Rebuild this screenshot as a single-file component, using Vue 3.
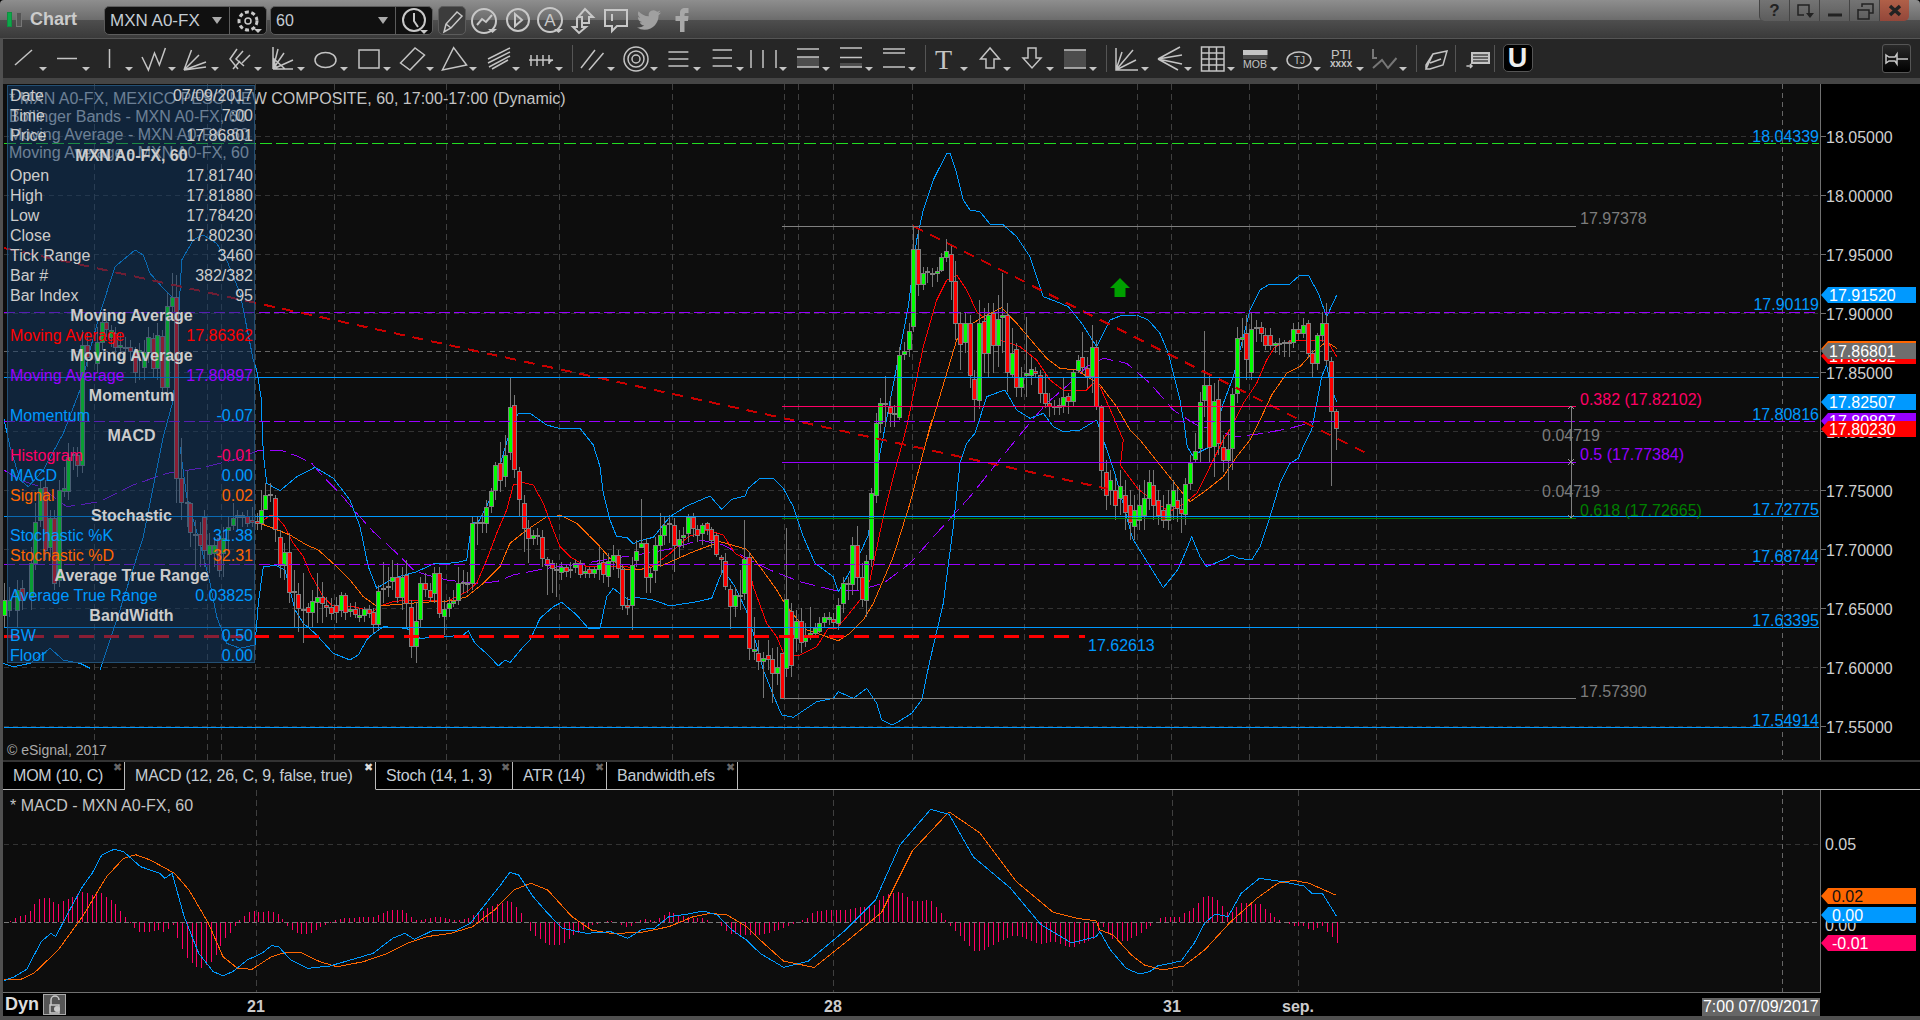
<template>
  <div class="app">
    <span class="left-edge"></span>
    <header class="titlebar">
      <span class="app-icon"><i class="on"></i><i></i></span>
      <span class="app-name">Chart</span>
      <div class="combo sym">
        <span class="combo-text">MXN A0-FX</span>
        <span class="combo-caret"></span>
        <span class="combo-btn">
          <svg width="36" height="29" viewBox="0 0 36 29">
            <circle cx="18" cy="14" r="9" class="ic gear" />
            <circle cx="18" cy="14" r="3" class="ic" />
            <path d="M24 22h8l-4 4z" class="fillc" />
          </svg>
        </span>
      </div>
      <div class="combo tf">
        <span class="combo-text small">60</span>
        <span class="combo-caret far"></span>
        <span class="combo-btn">
          <svg width="36" height="29" viewBox="0 0 36 29">
            <circle cx="18" cy="13" r="11" class="ic thick" />
            <path d="M18 6v8l4 6" class="ic thick" />
            <path d="M24 23h8l-4 4z" class="fillc" />
          </svg>
        </span>
      </div>
      <div class="pencil">
        <svg width="28" height="29" viewBox="0 0 28 29">
          <path d="M5 25l2-8L18 5l5 4-11 12zM7 17l5 4" class="ic" />
        </svg>
      </div>
      <svg class="title-icons" width="226" height="38" viewBox="468 0 226 38">
        <circle cx="485" cy="21" r="12" class="ic thick" />
        <path d="M478 25l5-6 4 3 6-7" class="ic thick" />
        <path d="M489 29h9l-4.500 4z" class="fillc" />
        <circle cx="519" cy="20" r="11" class="ic thick" />
        <path d="M516 14l7 6-7 6z" class="ic thick" />
        <circle cx="551" cy="20" r="12" class="ic thick" />
        <text x="551" y="26" text-anchor="middle" class="a-glyph">A</text>
        <path d="M555 29h9l-4.500 4z" class="fillc" />
        <path d="M586 9l8 8h-4v6h-7v-6h-4zM578 18v9h-4l6 6 7-6h-4v-4" class="ic thick" />
        <path d="M606 10h22v16h-10l-5 5v-5h-7zM613 14v7" class="ic thick" />
        <g transform="translate(638 8)">
          <path fill="#a0a0a0" d="M23.953 4.57a10 10 0 01-2.825.775 4.958 4.958 0 002.163-2.723c-.951.555-2.005.959-3.127 1.184a4.920 4.920 0 00-8.384 4.482C7.690 8.095 4.067 6.130 1.640 3.162a4.822 4.822 0 00-.666 2.475c0 1.710.870 3.213 2.188 4.096a4.904 4.904 0 01-2.228-.616v.060a4.923 4.923 0 003.946 4.827 4.996 4.996 0 01-2.212.085 4.936 4.936 0 004.604 3.417 9.867 9.867 0 01-6.102 2.105c-.390 0-.779-.023-1.170-.067a13.995 13.995 0 007.557 2.209c9.053 0 13.998-7.496 13.998-13.985 0-.210 0-.420-.015-.630A9.935 9.935 0 0024 4.590z" />
        </g>
        <path d="M681 32V21h-4.500v-5H681v-3c0-3.500 2-5 5-5h3.500v5H687c-1.200 0-1.500.6-1.500 1.500V16h4l-.5 5h-3.500v11z" fill="#a8a8a8" />
      </svg>
      <div class="win-btns">
        <span class="win-btn qm">?</span>
        <span class="win-btn">
          <svg width="22" height="18" viewBox="0 0 22 18"><path d="M15 12V3H4v10h6" class="wbi" /><path d="M12 11h8l-4 5z" fill="#222" /></svg>
        </span>
        <span class="win-btn">
          <svg width="22" height="18" viewBox="0 0 22 18"><path d="M4 13h14" class="wbi thick" /></svg>
        </span>
        <span class="win-btn">
          <svg width="22" height="18" viewBox="0 0 22 18"><path d="M4 8h11v9H4zM4 8V7M8 5V2h11v9h-4" class="wbi" /></svg>
        </span>
        <span class="win-btn close">
          <svg width="22" height="18" viewBox="0 0 22 18"><path d="M6 4l10 9M16 4L6 13" class="wbi x" /></svg>
        </span>
      </div>
    </header>

    <nav class="toolbar">
      <template v-for="(t, i) in tools" :key="i">
        <span v-if="t.sep" class="sep"></span>
        <svg v-else class="tool" :class="{ short: t.short }" :viewBox="t.short ? '0 0 30 30' : '0 0 43 30'">
          <path v-if="t.band" :d="t.band" fill="#4d4d4d" />
          <path v-if="t.solid" :d="t.solid" fill="#c4c4c4" />
          <path v-if="t.dark" :d="t.dark" fill="none" stroke="#444" stroke-width="1.500" />
          <path v-if="t.d" :d="t.d" class="ti" :class="{ dim: t.dim }" />
          <text v-if="t.text" :x="t.text.x" :y="t.text.y" :class="t.text.c">{{ t.text.s }}</text>
          <text v-if="t.text2" :x="t.text2.x" :y="t.text2.y" :class="t.text2.c">{{ t.text2.s }}</text>
          <path v-if="!t.short" d="M26 23h8l-4 4z" fill="#c4c4c4" />
        </svg>
      </template>
      <span class="u-btn">U</span>
      <span class="pin-btn">
        <svg width="26" height="24" viewBox="0 0 26 24">
          <path d="M2 8l3 2h6l2-3v10l-2-3H5l-3 2zM13 12h11" class="ic" />
        </svg>
      </span>
    </nav>
    <div class="strip"></div>

    <main class="main-pane">
      <svg class="plot" width="1920" height="676" viewBox="0 84 1920 676">
        <rect x="3" y="84" width="1817" height="676" fill="#0d0d0d" />
        <g shape-rendering="crispEdges">
          <line v-for="y in priceTicks" :key="'g' + y.y" x1="4" x2="1820" :y1="y.y" :y2="y.y" class="grid" />
          <line v-for="x in vgrid" :key="'v' + x" :x1="x" :x2="x" y1="84" y2="760" class="grid-v" />
          <line x1="1782.500" x2="1782.500" y1="84" y2="760" class="grid-c" />
          <line x1="4" x2="1820" y1="351.500" y2="351.500" class="grid-c" />
          <polyline :points="toStr(maPurple)" class="ln purple" />
          <polyline :points="toStr(maRed)" class="ln red" />
          <polyline :points="toStr(maOrange)" class="ln orange" />
          <polyline v-for="(b, i) in bands" :key="'b' + i" :points="toStr(b)" class="ln blue" />
          <g v-for="(c, i) in candles" :key="'c' + i">
            <line :x1="c.x" :x2="c.x" :y1="c.wt" :y2="c.wb" class="wick" />
            <rect :x="c.x - 2" :y="c.t" width="4" :height="c.h" class="body" :fill="c.g ? '#00ff00' : '#ff0000'" />
          </g>
          <line x1="4" x2="1108" y1="248" y2="489" class="trend" />
          <line x1="913" x2="1368" y1="226" y2="454" class="trend" />
          <line v-for="l in hlines" :key="'h' + l.y" x1="4" x2="1819" :y1="l.y" :y2="l.y" :class="l.c" />
          <line x1="4" x2="1085" y1="636" y2="636" class="reddash" />
          <line v-for="f in fibs" :key="'f' + f.y" x1="782" x2="1576" :y1="f.y" :y2="f.y" :stroke="f.c" />
          <line x1="1571" x2="1571" y1="406" y2="518" stroke="#808080" />
          <path d="M1568 409l3-3 3 3M1568 459l3 3 3-3M1568 465l3-3 3 3M1568 515l3 3 3-3" fill="none" stroke="#999" />
          <line x1="1820.500" x2="1820.500" y1="84" y2="760" stroke="#707070" />
          <line v-for="y in priceTicks" :key="'t' + y.y" x1="1820" x2="1826" :y1="y.y" :y2="y.y" stroke="#707070" />
        </g>
        <polygon points="1120,278 1130,288 1125.500,288 1125.500,297 1114.500,297 1114.500,288 1110,288" fill="#00a000" />

        <text x="9" y="104" class="st light">* MXN A0-FX, MEXICO PESO NEW COMPOSITE, 60, 17:00-17:00 (Dynamic)</text>
        <text x="9" y="122" class="st light">Bollinger Bands - MXN A0-FX, 60</text>
        <text x="9" y="140" class="st light">Moving Average - MXN A0-FX, 60</text>
        <text x="9" y="158" class="st light">Moving Average - MXN A0-FX, 60</text>
        <text x="7" y="755" class="copy">© eSignal, 2017</text>

        <text v-for="l in blueLabels" :key="l.s" :x="l.x" :y="l.y" :text-anchor="l.a" class="st bluet">{{ l.s }}</text>
        <text x="1580" y="224" class="st grayt">17.97378</text>
        <text x="1580" y="697" class="st grayt">17.57390</text>
        <text x="1580" y="405" class="st" fill="#ff0066">0.382 (17.82102)</text>
        <text x="1580" y="460" class="st" fill="#9900ff">0.5 (17.77384)</text>
        <text x="1580" y="516" class="st" fill="#008000">0.618 (17.72665)</text>
        <text x="1571" y="441" text-anchor="middle" class="st grayt">0.04719</text>
        <text x="1571" y="497" text-anchor="middle" class="st grayt">0.04719</text>

        <text v-for="y in priceTicks" :key="'l' + y.y" x="1826" :y="y.y + 6" class="st axis">{{ y.s }}</text>
        <g v-for="tag in priceTags" :key="tag.s + tag.y">
          <polygon :points="tagPoints(tag.y, 8)" :fill="tag.c" />
          <text x="1829" :y="tag.y + 6" class="st" fill="#fff">{{ tag.s }}</text>
        </g>
      </svg>

      <aside class="info">
        <div v-for="(r, i) in infoRows" :key="i" class="info-row" :class="{ head: r.head }" :style="{ color: r.c }">
          <span>{{ r.l }}</span>
          <span v-if="r.v">{{ r.v }}</span>
        </div>
      </aside>
    </main>

    <div class="tabs">
      <div v-for="tab in tabs" :key="tab.s" class="tab" :class="{ active: tab.on }" :style="{ width: tab.w + 'px' }">
        {{ tab.s }}
        <span class="tab-x">✖</span>
      </div>
      <div class="tab-rest"></div>
    </div>

    <section class="lower-pane">
      <svg width="1920" height="203" viewBox="0 790 1920 203">
        <rect x="3" y="790" width="1817" height="203" fill="#0d0d0d" />
        <g shape-rendering="crispEdges">
          <line x1="4" x2="1820" y1="844.500" y2="844.500" class="grid" />
          <line v-for="x in [256.5, 833.5, 1172.5, 1298.5]" :key="x" :x1="x" :x2="x" y1="790" y2="993" class="grid-v" />
          <line x1="1782.500" x2="1782.500" y1="790" y2="993" class="grid-c" />
          <line v-for="(h, i) in hist" :key="i" :x1="h.x" :x2="h.x" y1="922" :y2="h.y" stroke="#ff0066" />
          <line x1="4" x2="1820" y1="922.500" y2="922.500" class="zero" />
          <polyline :points="toStr(sigLine)" class="ln orange" />
          <polyline :points="toStr(macdLine)" class="ln blue" />
          <line x1="1820.500" x2="1820.500" y1="790" y2="993" stroke="#707070" />
          <line x1="3" x2="1820" y1="992.500" y2="992.500" stroke="#707070" />
        </g>
        <text x="10" y="811" class="st light">* MACD - MXN A0-FX, 60</text>
        <text x="1825" y="850" class="st axis">0.05</text>
        <text x="1825" y="931" class="st axis">0.00</text>
        <g v-for="tag in macdTags" :key="tag.s">
          <polygon :points="tagPoints(tag.y, 8)" :fill="tag.c" />
          <text x="1832" :y="tag.y + 6" class="st" :fill="tag.t">{{ tag.s }}</text>
        </g>
      </svg>
    </section>

    <footer class="x-axis">
      <span class="dyn">Dyn</span>
      <span class="lock">
        <svg width="22" height="20" viewBox="0 0 22 20">
          <path d="M7 10V5a4 4 0 018 0M6 10h9v8H6z" class="ic" />
          <circle cx="13" cy="14" r="3" fill="#ccc" />
        </svg>
      </span>
      <span v-for="d in dates" :key="d.s" class="date" :style="{ left: d.x + 'px' }">{{ d.s }}</span>
      <span class="stamp">7:00 07/09/2017</span>
    </footer>
    <div class="bottom-bar"></div>
  </div>
</template>

<script setup>
// page coords everywhere on the charts, the zoom lists are in 3x crop coords
const z = (bx, by, rows) => rows.map(([x, y]) => [bx + x / 3, by + y / 3])
const s = (rows) => rows.map(([x, y]) => [x * 1.2245, y * 1.2245])
const toStr = (pts) => pts.map((p) => p[0].toFixed(1) + ',' + p[1].toFixed(1)).join(' ')
const tagPoints = (y, h) => `1821,${y} 1828,${y - h} 1916,${y - h} 1916,${y + h} 1828,${y + h}`

const bar = (bx, by, rows) =>
  rows.map(([x, t, b, wt, wb, g]) => {
    const top = Math.round(by + t / 3) + 0.5
    const bot = Math.round(by + b / 3) + 0.5
    return {
      x: Math.round(bx + x / 3) + 0.5,
      t: top,
      h: Math.max(bot - top, 1),
      wt: by + wt / 3,
      wb: by + wb / 3,
      g,
    }
  })

const candles = [
  ...bar(0, 370, [
    [12, 690, 735, 640, 770, 1], [27, 690, 720, 650, 740, 1], [50, 660, 720, 630, 770, 1], [65, 655, 690, 630, 720, 0],
    [93, 580, 680, 530, 720, 1], [105, 455, 580, 400, 600, 1], [120, 355, 450, 330, 470, 1], [135, 350, 540, 330, 570, 0],
    [150, 445, 530, 420, 560, 1], [163, 445, 640, 420, 660, 0], [178, 360, 630, 330, 650, 1], [192, 355, 362, 290, 380, 1],
    [205, 260, 362, 220, 390, 1], [219, 252, 256, 230, 300, 1], [232, 255, 285, 230, 320, 0], [246, -75, 285, -120, 310, 1],
    [262, -75, -40, -110, -10, 0], [290, -85, -20, -130, 10, 1], [305, -145, -85, -170, -60, 1], [318, -145, -122, -170, -100, 0],
    [332, -120, -100, -135, -70, 1], [346, -110, -70, -130, -50, 0], [361, -75, -70, -110, -40, 1], [375, -70, -65, -100, -30, 1],
    [390, -70, -58, -90, -30, 0], [405, -55, 5, -70, 40, 0], [418, -60, -55, -80, 30, 1], [432, -55, -10, -90, 30, 1],
    [445, -100, -55, -130, -20, 1], [460, -95, -5, -110, 20, 0], [472, -105, -5, -140, 30, 1], [487, -102, 50, -120, 90, 0],
    [502, -192, 50, -230, 80, 1], [515, -218, -192, -290, -170, 1], [528, -220, 325, -285, 400, 0], [543, 325, 395, 205, 450, 0],
    [560, 395, 400, 300, 470, 1], [570, 400, 487, 395, 530, 0], [585, 492, 495, 450, 600, 1], [600, 492, 525, 455, 590, 0],
    [612, 440, 540, 420, 590, 0], [628, 525, 552, 490, 610, 1], [643, 525, 550, 500, 590, 1], [656, 505, 600, 490, 620, 0],
    [670, 505, 550, 470, 620, 1], [684, 470, 480, 440, 540, 1], [700, 445, 465, 400, 480, 1], [712, 435, 440, 420, 480, 1],
    [727, 435, 440, 425, 470, 1], [742, 438, 460, 420, 470, 0], [757, 450, 455, 410, 470, 0], [770, 452, 458, 430, 480, 0],
  ]),
  ...bar(260, 370, [
    [3, 420, 458, 360, 480, 1], [16, 375, 418, 340, 420, 1], [31, 373, 375, 340, 395, 1], [46, 385, 478, 375, 515, 0],
    [61, 502, 585, 480, 625, 0], [73, 545, 585, 520, 630, 1], [88, 545, 665, 490, 700, 0], [103, 662, 667, 600, 770, 1],
    [115, 673, 715, 640, 785, 0], [130, 716, 721, 610, 820, 1], [145, 712, 726, 700, 770, 0], [157, 692, 726, 660, 770, 1],
    [172, 680, 696, 610, 760, 1], [187, 682, 700, 635, 760, 0], [199, 706, 712, 680, 740, 0], [214, 712, 730, 685, 750, 0],
    [229, 704, 726, 680, 760, 0], [244, 674, 720, 665, 740, 1], [256, 674, 726, 670, 750, 0], [271, 716, 724, 700, 740, 1],
    [286, 716, 733, 695, 745, 0], [298, 736, 740, 715, 755, 1], [313, 718, 736, 710, 755, 1], [328, 718, 730, 705, 745, 0],
    [340, 727, 763, 715, 790, 0], [355, 662, 763, 645, 780, 1], [370, 655, 658, 575, 700, 1], [385, 648, 652, 590, 680, 1],
    [397, 620, 632, 570, 660, 1], [412, 620, 680, 580, 700, 0], [427, 622, 680, 590, 720, 1], [439, 616, 700, 570, 775, 0],
    [454, 710, 828, 690, 865, 0], [469, 752, 828, 695, 878, 1], [481, 640, 748, 620, 775, 1], [496, 640, 658, 610, 680, 0],
    [511, 660, 680, 640, 695, 0], [523, 608, 670, 590, 700, 1], [538, 608, 730, 590, 745, 0], [553, 718, 738, 690, 795, 1],
    [568, 700, 715, 680, 740, 1], [580, 694, 698, 660, 710, 1], [595, 638, 690, 590, 705, 1], [610, 637, 640, 600, 670, 1],
    [622, 638, 641, 605, 670, 1], [637, 458, 640, 440, 660, 1], [652, 455, 458, 440, 525, 1], [667, 455, 458, 430, 490, 1],
    [679, 412, 460, 390, 490, 1], [694, 364, 408, 355, 430, 1], [706, 284, 360, 275, 390, 1], [721, 278, 330, 215, 365, 0],
    [736, 254, 318, 195, 350, 1], [751, 110, 246, 25, 270, 1], [763, 104, 298, 75, 325, 0], [778, 302, 388, 290, 440, 0],
    [793, 398, 474, 375, 545, 0], [805, 474, 505, 450, 580, 0], [820, 494, 505, 480, 525, 1], [832, 494, 496, 475, 525, 1],
    [847, 500, 565, 480, 590, 0], [862, 567, 585, 560, 675, 0], [877, 580, 595, 570, 670, 0], [889, 597, 600, 580, 680, 1],
    [904, 590, 606, 575, 630, 1], [919, 592, 604, 585, 620, 0], [931, 596, 598, 575, 625, 1], [946, 578, 592, 570, 610, 1],
    [961, 578, 612, 570, 625, 0], [976, 602, 610, 590, 625, 1], [988, 598, 610, 590, 625, 0], [1003, 598, 610, 590, 625, 1],
    [1018, 580, 598, 530, 630, 1], [1030, 575, 612, 550, 640, 0], [1045, 572, 618, 550, 650, 1], [1060, 554, 572, 525, 600, 1],
    [1075, 554, 595, 540, 625, 0], [1087, 598, 706, 585, 720, 0], [1102, 706, 712, 680, 735, 0], [1117, 584, 706, 560, 780, 1],
    [1129, 542, 570, 510, 590, 1],
  ]),
  ...bar(620, 420, [
    [64, 368, 382, 238, 385, 1], [79, 368, 472, 355, 518, 0], [91, 460, 470, 440, 518, 1], [106, 376, 450, 350, 490, 1],
    [121, 345, 376, 280, 440, 1], [133, 316, 344, 290, 375, 1], [148, 308, 312, 285, 370, 0], [163, 314, 374, 295, 455, 0],
    [178, 356, 376, 330, 410, 1], [190, 344, 352, 320, 385, 1], [205, 292, 338, 282, 365, 1], [220, 292, 324, 280, 350, 0],
    [232, 326, 346, 315, 365, 0], [247, 314, 338, 310, 375, 1], [262, 310, 326, 305, 345, 0], [274, 328, 360, 320, 385, 0],
    [289, 346, 402, 340, 410, 0], [304, 412, 418, 405, 465, 0], [316, 424, 498, 400, 510, 0], [331, 508, 558, 495, 628, 0],
    [346, 526, 558, 500, 590, 1], [361, 526, 528, 450, 570, 1], [373, 418, 520, 300, 540, 1], [388, 412, 684, 395, 720, 0],
    [403, 688, 694, 590, 720, 1], [415, 698, 724, 660, 750, 0], [430, 714, 724, 695, 835, 1], [445, 704, 716, 660, 750, 0],
    [457, 718, 760, 685, 850, 0], [472, 740, 760, 680, 795, 1], [487, 700, 835, 700, 835, 0], [499, 536, 744, 325, 770, 1],
    [514, 574, 736, 550, 770, 0], [529, 604, 654, 570, 695, 1], [544, 604, 666, 565, 700, 0], [556, 644, 664, 610, 680, 1],
    [571, 640, 644, 560, 660, 1], [586, 625, 640, 610, 650, 1], [598, 610, 634, 590, 640, 1], [613, 592, 606, 580, 625, 1],
    [628, 592, 596, 575, 615, 1], [640, 596, 605, 580, 625, 0], [655, 556, 608, 535, 630, 1], [670, 488, 550, 470, 580, 1],
    [685, 488, 491, 470, 540, 1], [697, 374, 492, 350, 525, 1], [712, 374, 470, 318, 510, 0], [727, 472, 538, 430, 560, 0],
    [739, 422, 540, 405, 590, 1], [754, 220, 418, 205, 440, 1], [769, 8, 226, -20, 248, 1],
  ]),
  ...bar(760, 140, [
    [361, 788, 850, 775, 880, 1], [376, 788, 792, 708, 860, 0], [391, 800, 818, 770, 860, 0], [403, 820, 822, 795, 860, 1],
    [418, 646, 832, 620, 840, 1], [433, 632, 642, 605, 660, 1], [448, 574, 628, 548, 650, 1], [460, 328, 558, 260, 575, 1],
    [475, 328, 432, 270, 468, 0], [490, 398, 432, 380, 450, 1], [502, 392, 396, 380, 430, 0], [517, 398, 402, 385, 442, 1],
    [532, 394, 398, 380, 425, 1], [544, 352, 390, 340, 395, 1], [559, 332, 350, 297, 365, 1], [574, 342, 424, 315, 480, 0],
    [586, 424, 550, 362, 600, 0], [601, 548, 612, 515, 690, 0], [616, 548, 606, 515, 640, 1], [631, 548, 706, 525, 745, 0],
    [643, 716, 776, 690, 842, 0], [658, 550, 780, 480, 808, 1], [673, 544, 638, 505, 700, 0], [685, 524, 640, 490, 710, 1],
    [700, 520, 616, 490, 700, 0], [715, 538, 616, 465, 680, 1], [727, 526, 530, 400, 640, 1], [742, 526, 696, 490, 755, 0],
    [757, 638, 702, 565, 715, 1], [769, 628, 742, 610, 770, 0], [784, 712, 742, 680, 770, 1], [799, 700, 706, 530, 770, 1],
    [814, 688, 706, 650, 735, 1], [826, 692, 700, 680, 715, 0], [841, 704, 760, 690, 790, 0], [856, 758, 788, 700, 805, 0],
    [868, 790, 798, 760, 830, 0], [883, 798, 802, 780, 825, 1], [898, 796, 802, 775, 825, 1], [910, 770, 794, 710, 820, 1],
    [925, 768, 784, 760, 822, 0], [940, 696, 784, 690, 800, 1], [955, 660, 690, 645, 700, 1], [967, 652, 680, 575, 700, 0],
    [982, 684, 708, 650, 745, 0], [997, 622, 708, 555, 760, 1], [1009, 622, 798, 600, 810, 0], [1024, 802, 990, 795, 1050, 0],
  ]),
  ...bar(0, 0, [
    [3318, 1416, 1485, 1380, 1530, 0], [3330, 1440, 1470, 1410, 1515, 1], [3345, 1470, 1515, 1434, 1560, 0], [3360, 1458, 1494, 1410, 1545, 1],
    [3375, 1485, 1536, 1440, 1590, 0], [3390, 1515, 1566, 1470, 1620, 0], [3402, 1530, 1578, 1485, 1620, 1], [3417, 1515, 1560, 1455, 1590, 1],
    [3432, 1494, 1545, 1440, 1590, 1], [3447, 1446, 1494, 1410, 1530, 1], [3459, 1455, 1515, 1410, 1560, 0], [3474, 1500, 1545, 1470, 1575, 0],
    [3489, 1530, 1560, 1485, 1584, 0], [3504, 1512, 1560, 1470, 1590, 1], [3519, 1470, 1518, 1440, 1560, 1], [3531, 1500, 1524, 1464, 1566, 0],
  ]),
  ...bar(1180, 260, [
    [3, 747, 760, 715, 818, 0], [16, 673, 762, 655, 795, 1], [31, 608, 670, 585, 690, 1], [46, 574, 596, 520, 610, 1],
    [61, 426, 565, 395, 608, 1], [73, 374, 420, 212, 470, 1], [88, 376, 562, 340, 610, 0], [103, 424, 558, 370, 650, 1],
    [115, 418, 548, 360, 585, 0], [130, 560, 600, 525, 635, 0], [145, 568, 600, 515, 690, 1], [157, 403, 565, 385, 630, 1],
    [172, 235, 400, 200, 430, 1], [187, 232, 236, 175, 265, 1], [199, 220, 298, 165, 360, 0], [214, 206, 336, 160, 360, 1],
    [229, 200, 204, 180, 245, 1], [244, 200, 220, 185, 245, 0], [256, 224, 256, 205, 270, 0], [271, 224, 256, 205, 270, 0],
    [286, 248, 256, 245, 280, 1], [298, 248, 252, 235, 285, 1], [313, 246, 250, 240, 290, 1], [328, 246, 250, 240, 290, 1],
    [340, 208, 246, 190, 265, 1], [355, 208, 220, 185, 240, 0], [370, 194, 220, 175, 235, 1], [385, 190, 280, 180, 295, 0],
    [397, 278, 310, 270, 355, 0], [412, 226, 310, 220, 330, 1], [427, 190, 224, 155, 245, 1], [439, 190, 300, 128, 315, 0],
    [454, 302, 452, 292, 678, 0], [469, 454, 505, 448, 570, 0],
  ]),
]

const bands = [
  z(0, 370, [[12, 148], [30, 230], [60, 330], [85, 350], [130, 300], [190, 190], [240, 60], [270, -60], [300, -170], [345, -310], [405, -360], [430, -345], [450, -290], [490, -245], [515, -220]]),
  [
    ...z(0, 370, [[300, 900], [350, 750], [430, 500], [490, 200], [520, 90], [530, -50], [545, -330], [580, -390], [610, -405], [650, -380], [680, -330], [720, -230], [760, -30], [770, 0]]),
    ...z(260, 370, [[3, 80], [10, 250], [20, 340], [60, 362], [110, 320], [165, 292], [220, 325], [270, 390], [300, 470], [325, 590], [350, 655], [400, 625], [470, 605], [520, 582], [590, 578], [620, 570], [635, 460], [655, 455], [680, 410], [700, 360], [720, 285], [745, 200], [775, 130], [810, 130], [860, 165], [905, 177], [960, 175], [1000, 225], [1020, 290], [1030, 370], [1050, 450], [1070, 500]]),
    ...z(620, 420, [[20, 352], [40, 372], [60, 362], [100, 352], [150, 290], [200, 258], [270, 228], [305, 268], [335, 238], [375, 228], [385, 205], [420, 175], [460, 175], [490, 205], [520, 260], [550, 350], [585, 430], [640, 470], [655, 515], [670, 490], [720, 400], [745, 345], [780, 100]]),
    ...z(760, 140, [[410, 680], [445, 500], [470, 300], [490, 210], [520, 120], [560, 40], [570, 40], [590, 100], [610, 180], [630, 210], [660, 215], [690, 252], [730, 255], [770, 290], [810, 350], [850, 470], [890, 485], [925, 500], [965, 550], [1010, 620], [1050, 540], [1080, 528], [1130, 525], [1165, 540], [1200, 580], [1225, 640], [1260, 780]]),
    ...z(1180, 260, [[12, 490], [22, 560], [40, 590], [60, 575], [90, 560], [110, 500], [130, 430], [160, 350], [185, 250], [210, 150], [240, 90], [265, 75], [330, 72], [360, 45], [385, 45], [415, 100], [440, 170], [470, 105]]),
  ],
  z(0, 370, [[10, 880], [40, 890], [90, 880], [150, 835], [190, 870], [240, 880], [270, 895]]),
  [
    ...z(0, 370, [[540, 230], [560, 380], [600, 520], [630, 640], [650, 740], [680, 820], [720, 835], [765, 825], [775, 700], [790, 590]]),
    ...z(260, 370, [[20, 590], [45, 585], [75, 600], [90, 660], [105, 720], [130, 760], [165, 790], [220, 850], [270, 870], [295, 855], [320, 810], [335, 795], [370, 770], [440, 775], [480, 805], [560, 800], [610, 795], [625, 782], [645, 820], [690, 860], [715, 888], [735, 870], [750, 878], [790, 830], [810, 810], [840, 745], [880, 710], [905, 697], [950, 735], [985, 775], [1020, 775], [1040, 680], [1060, 655], [1090, 680], [1110, 690]]),
    ...z(620, 420, [[35, 530], [100, 540], [150, 558], [230, 545], [275, 535], [300, 470], [310, 450], [345, 500], [378, 570], [400, 640], [430, 750], [460, 825], [485, 885], [520, 892], [590, 845], [640, 835], [655, 815], [700, 835], [740, 805], [770, 850], [785, 900], [815, 915], [835, 905], [875, 880], [905, 840], [930, 720], [970, 550], [1000, 320], [1020, 130], [1040, 70], [1065, 40]]),
    ...z(760, 140, [[680, 770], [720, 755], [735, 750], [770, 810], [810, 835], [850, 820], [880, 860], [910, 875], [960, 870], [1010, 840], [1020, 870]]),
    ...s([[910, 385], [925, 440], [950, 480], [962, 465]]),
    ...z(1180, 260, [[15, 880], [35, 830], [60, 890], [80, 920], [140, 895], [155, 885], [175, 895], [215, 900], [240, 860], [270, 770], [300, 670], [330, 610], [355, 595], [370, 560], [395, 510], [410, 430], [425, 350], [440, 315], [455, 390], [470, 425]]),
  ],
]

const maRed = [
  ...z(260, 370, [[0, 460], [30, 435], [50, 440], [75, 470], [100, 520], [130, 560], [150, 610], [190, 680], [215, 705], [280, 710], [340, 725], [360, 708], [400, 695], [440, 690], [490, 690], [560, 695], [620, 665], [650, 640], [680, 570], [710, 490], [740, 420], [760, 345], [790, 338], [820, 345], [850, 400], [880, 480], [900, 530], [930, 560], [980, 590], [1040, 590]]),
  ...z(620, 420, [[20, 440], [60, 450], [110, 430], [150, 400], [205, 350], [265, 330], [310, 345], [345, 400], [380, 420], [400, 500], [440, 610], [470, 650], [495, 710], [540, 705], [590, 680], [625, 625], [650, 625], [680, 590], [720, 540], [750, 480], [790, 290], [820, 170], [850, 60]]),
  ...z(760, 140, [[440, 860], [490, 620], [530, 480], [560, 420], [590, 405], [620, 450], [650, 515], [680, 540], [720, 600], [780, 620], [830, 660], [870, 720], [910, 750], [980, 750], [1000, 730], [1020, 740], [1060, 830], [1090, 900]]),
  ...s([[915, 380], [930, 400], [955, 418]]),
  ...z(1180, 260, [[20, 725], [50, 700], [80, 640], [100, 600], [130, 540], [160, 490], [190, 430], [230, 370], [260, 300], [285, 260], [340, 240], [400, 240], [440, 240], [470, 290]]),
]

const maOrange = [
  ...z(260, 370, [[0, 460], [40, 475], [90, 495], [140, 525], [175, 540], [230, 590], [270, 630], [310, 680], [345, 705], [390, 705], [450, 700], [520, 695], [580, 692], [620, 680], [670, 640], [720, 590], [750, 520], [800, 480], [860, 440], [905, 437], [950, 460], [990, 500], [1020, 530], [1050, 565]]),
  ...z(620, 420, [[20, 450], [60, 448], [130, 435], [220, 395], [300, 365], [380, 388], [420, 440], [470, 510], [500, 560], [560, 630], [620, 650], [655, 662], [690, 640], [730, 600], [760, 550], [820, 410], [870, 250], [935, 0]]),
  ...z(760, 140, [[500, 900], [545, 750], [590, 600], [630, 555], [670, 530], [725, 503], [770, 550], [830, 620], [860, 655], [900, 685], [950, 690], [1020, 735], [1070, 800], [1110, 870], [1140, 900]]),
  ...z(1180, 260, [[0, 690], [30, 725], [80, 690], [130, 650], [170, 590], [210, 540], [240, 480], [275, 405], [320, 340], [360, 320], [400, 275], [440, 245], [470, 265]]),
]

const maPurple = [
  ...z(0, 370, [[12, 300], [60, 330], [120, 350], [200, 410], [300, 395], [400, 345], [500, 310], [600, 295], [700, 270], [780, 240]]),
  ...z(260, 370, [[5, 240], [60, 240], [110, 258], [155, 280], [190, 320], [240, 370], [290, 430], [340, 485], [400, 540], [430, 570], [460, 600], [500, 615], [560, 630], [640, 640], [710, 635], [760, 615], [860, 595], [960, 582], [1060, 565]]),
  ...z(620, 420, [[80, 400], [160, 385], [240, 360], [310, 375], [390, 420], [450, 450], [540, 485], [640, 510], [720, 510], [790, 490], [870, 430], [950, 340], [1050, 230], [1130, 130]]),
  ...z(760, 140, [[800, 860], [860, 790], [930, 730], [980, 680], [1030, 655], [1100, 670], [1170, 730], [1240, 810]]),
  ...z(1180, 260, [[10, 470], [50, 495], [100, 510], [170, 530], [250, 520], [330, 505], [400, 485]]),
]

const macdLine = [
  ...[[8, 722], [30, 710], [55, 688], [85, 605], [105, 580], [115, 590], [140, 520], [170, 440], [190, 400], [210, 345], [235, 328], [255, 335], [290, 380], [330, 400], [340, 415], [355, 400], [380, 530], [410, 640], [440, 695], [460, 707], [480, 695], [510, 660], [540, 640], [560, 617], [575, 620], [600, 660], [635, 685], [680, 678], [730, 657], [770, 640], [810, 595], [835, 580], [855, 598], [895, 570], [940, 572], [970, 550], [1000, 495], [1030, 440], [1052, 397], [1070, 405], [1100, 470], [1130, 520], [1160, 565], [1210, 580], [1260, 575], [1295, 595], [1325, 568], [1350, 565], [1380, 530], [1420, 522], [1450, 513], [1480, 525], [1510, 570], [1540, 600], [1568, 640]].map(([x, y]) => [x / 2.063, y / 3 + 740]),
  ...s([[640, 790], [660, 785], [690, 760], [715, 735], [735, 690], [760, 661], [775, 665], [795, 700], [825, 725], [850, 755], [875, 770], [895, 765]]),
  ...[[0, 455], [20, 510], [50, 565], [75, 582], [95, 575], [110, 558], [155, 543], [180, 490], [200, 430], [220, 402], [245, 410], [270, 340], [305, 295], [350, 305], [390, 318], [405, 340], [425, 340], [452, 408]].map(([x, y]) => [x / 1.912 + 1100, y / 3 + 780]),
]

const sigLine = [
  ...[[8, 718], [40, 720], [70, 700], [120, 630], [170, 530], [220, 410], [255, 355], [280, 344], [310, 360], [360, 400], [390, 450], [430, 550], [460, 650], [490, 685], [520, 688], [560, 650], [590, 637], [620, 637], [660, 665], [695, 680], [750, 665], [800, 640], [840, 610], [880, 590], [930, 580], [975, 560], [1020, 510], [1060, 450], [1095, 430], [1130, 450], [1180, 530], [1220, 570], [1260, 580], [1320, 578], [1380, 560], [1430, 530], [1465, 520], [1500, 525], [1540, 560], [1568, 600]].map(([x, y]) => [x / 2.063, y / 3 + 740]),
  ...s([[640, 785], [665, 790], [690, 770], [720, 745], [745, 695], [775, 663], [800, 680], [830, 720], [860, 745], [880, 750], [895, 752]]),
  ...[[0, 450], [25, 465], [60, 525], [85, 555], [120, 570], [160, 558], [200, 510], [250, 425], [300, 355], [340, 310], [370, 301], [400, 310], [450, 345]].map(([x, y]) => [x / 1.912 + 1100, y / 3 + 780]),
]

const at = (line, x) => {
  for (let i = 1; i < line.length; i++) {
    if (line[i][0] >= x) {
      const [x0, y0] = line[i - 1]
      const [x1, y1] = line[i]
      return y0 + ((y1 - y0) * (x - x0)) / (x1 - x0 || 1)
    }
  }
  return line[line.length - 1][1]
}

const hist = []
for (let x = 1336.5; x > 8; x -= 4.77) {
  const d = at(macdLine, x) - at(sigLine, x)
  hist.push({ x: Math.round(x) + 0.5, y: 922 + d })
}

const priceTicks = [
  ['18.05000', 136], ['18.00000', 195], ['17.95000', 254], ['17.90000', 313], ['17.85000', 372], ['17.80000', 431],
  ['17.75000', 490], ['17.70000', 549], ['17.65000', 608], ['17.60000', 667], ['17.55000', 726],
].map(([l, y]) => ({ s: l, y: y + 0.5 }))

const vgrid = [94, 207, 221, 255, 334, 446, 559, 672, 784, 798, 833, 912, 1024, 1137, 1171, 1249, 1298, 1376].map((x) => x + 0.5)

const hlines = [
  { y: 143.5, c: 'gdash' }, { y: 312.5, c: 'pdash' }, { y: 421.5, c: 'pdash' }, { y: 564.5, c: 'pdash' },
  { y: 377.5, c: 'bsolid' }, { y: 516.5, c: 'bsolid' }, { y: 627.5, c: 'bsolid' }, { y: 727.5, c: 'bsolid' },
]

const fibs = [
  { y: 226.5, c: '#808080' }, { y: 406.5, c: '#ff0066' }, { y: 462.5, c: '#9900ff' }, { y: 518.5, c: '#008000' }, { y: 698.5, c: '#808080' },
]

const blueLabels = [
  { s: '18.04339', x: 1819, y: 142, a: 'end' }, { s: '17.90119', x: 1819, y: 310, a: 'end' },
  { s: '17.80816', x: 1819, y: 420, a: 'end' }, { s: '17.72775', x: 1819, y: 515, a: 'end' },
  { s: '17.68744', x: 1819, y: 562, a: 'end' }, { s: '17.63395', x: 1819, y: 626, a: 'end' },
  { s: '17.54914', x: 1819, y: 726, a: 'end' }, { s: '17.62613', x: 1088, y: 651, a: 'start' },
]

const priceTags = [
  { s: '17.91520', y: 295, c: '#0099ff' }, { s: '17.86641', y: 349, c: '#ff6600' }, { s: '17.86362', y: 356, c: '#ff0000' },
  { s: '17.86801', y: 351, c: '#6e6e6e' }, { s: '17.82507', y: 402, c: '#0099ff' }, { s: '17.80897', y: 421, c: '#9900ff' },
  { s: '17.80230', y: 429, c: '#ff0000' },
]

const macdTags = [
  { s: '0.02', y: 896, c: '#ff6600', t: '#111' }, { s: '0.00', y: 915, c: '#0099ff', t: '#fff' }, { s: '-0.01', y: 943, c: '#ff0066', t: '#fff' },
]

const infoRows = [
  { l: 'Date', v: '07/09/2017' }, { l: 'Time', v: '7:00' }, { l: 'Price', v: '17.86801' },
  { l: 'MXN A0-FX, 60', head: true },
  { l: 'Open', v: '17.81740' }, { l: 'High', v: '17.81880' }, { l: 'Low', v: '17.78420' }, { l: 'Close', v: '17.80230' },
  { l: 'Tick Range', v: '3460' }, { l: 'Bar #', v: '382/382' }, { l: 'Bar Index', v: '95' },
  { l: 'Moving Average', head: true }, { l: 'Moving Average', v: '17.86362', c: '#ff0000' },
  { l: 'Moving Average', head: true }, { l: 'Moving Average', v: '17.80897', c: '#9900ff' },
  { l: 'Momentum', head: true }, { l: 'Momentum', v: '-0.07', c: '#0099ff' },
  { l: 'MACD', head: true }, { l: 'Histogram', v: '-0.01', c: '#ff0066' }, { l: 'MACD', v: '0.00', c: '#0099ff' }, { l: 'Signal', v: '0.02', c: '#ff6600' },
  { l: 'Stochastic', head: true }, { l: 'Stochastic %K', v: '31.38', c: '#0099ff' }, { l: 'Stochastic %D', v: '32.31', c: '#ff6600' },
  { l: 'Average True Range', head: true }, { l: 'Average True Range', v: '0.03825', c: '#0099ff' },
  { l: 'BandWidth', head: true }, { l: 'BW', v: '0.50', c: '#0099ff' }, { l: 'Floor', v: '0.00', c: '#0099ff' },
]

const tabs = [
  { s: 'MOM (10, C)', w: 122 }, { s: 'MACD (12, 26, C, 9, false, true)', w: 251, on: true },
  { s: 'Stoch (14, 1, 3)', w: 137 }, { s: 'ATR (14)', w: 94 }, { s: 'Bandwidth.efs', w: 131 },
]

const dates = [{ s: '21', x: 256 }, { s: '28', x: 833 }, { s: '31', x: 1172 }, { s: 'sep.', x: 1298 }]

const tools = [
  { d: 'M2 21L19 6' },
  { d: 'M1 14.500H21' },
  { d: 'M10.500 5V24' },
  { d: 'M0 13L6.400 26L12.500 9L17.400 21L23.400 4' },
  { d: 'M-1 26L6.500 6M-1 26L14 11M-1 26L21 18M-1 26L21 23' },
  { d: 'M9 5L2 15L10 25M15 7L8 15L16 22M22 11L14 19M5 25L12 17' },
  { d: 'M2 25V3M2 25L7 5M2 25L13 9M2 25L22 16M2 25H22M6 25L2 15M2 14L14 25' },
  { d: 'M22 16a10.500 7.500 0 1 1-21 0a10.500 7.500 0 1 1 21 0' },
  { d: 'M2 6H22V24H2Z' },
  { d: 'M0.500 19L15 4L24.500 11L10 26Z' },
  { d: 'M-0.600 26L10.600 3.600L23.600 21Z' },
  { d: 'M2 15L24 4M2 19L24 8M3 23L24 12M6 25L22 16' },
  { d: 'M0 16H24M2 11V22M8 11V22M14 11V22M20 11V20Q20 17 24 16' },
  { sep: true },
  { d: 'M0 24L14 6M8 26L22.500 9' },
  { d: 'M24 15a12 12 0 1 1-24 0a12 12 0 1 1 24 0M20 15a8 8 0 1 1-16 0a8 8 0 1 1 16 0M16 15a4 4 0 1 1-8 0a4 4 0 1 1 8 0' },
  { d: 'M1.400 8H21.400M1.400 15H21.400M1.400 22H21.400' },
  { d: 'M2.600 6H22M2.600 14H22M2.600 22H22' },
  { d: 'M-2 6V24M10 6V24M23 6V24' },
  { band: 'M1 13H23V23H1Z', d: 'M1 5H23M1 13H23M1 23H23' },
  { band: 'M1 19H23V23H1Z', d: 'M1 4H23M1 13.500H23M1 23H23' },
  { d: 'M1 5H23M1 9H23M1 23H23' },
  { sep: true },
  { text: { s: 'T', x: 1, y: 25, c: 'tx-t' } },
  { d: 'M13 4L3.500 15H9V24H17V15H22.500Z' },
  { d: 'M8 4H16V14H21L12 24L3 14H8Z' },
  { band: 'M1 6H23V24H1Z', d: 'M1 6H23M1 24H23' },
  { sep: true },
  { d: 'M1 4V26H23M1 26L18 6M1 26L7 8M1 26L21 16' },
  { d: 'M0 15L22 3M0 15L24 11M0 15L24 20M0 15L20 26' },
  { d: 'M0.500 3H23V27H0.500ZM8 3V27M15.500 3V27M0.500 9H23M0.500 15H23M0.500 21H23' },
  { solid: 'M-1 6H23.500V11H-1Z', band: 'M-1 11H23.500V15H-1Z', text: { s: 'MOB', x: -1, y: 24, c: 'tx-s' } },
  { d: 'M24 16a12 8 0 1 1-24 0a12 8 0 1 1 24 0', text: { s: 'TJ', x: 7, y: 20, c: 'tx-xs' } },
  { text: { s: 'PTI', x: 1, y: 15, c: 'tx-m' }, text2: { s: 'xxxx', x: 0, y: 23, c: 'tx-xs b' } },
  { d: 'M0 5V14H4M0 24L9 16L15 24L23.500 14', dim: true },
  { sep: true },
  { short: true, d: 'M1 25L8 10L22 7L18 21L5 25ZM1 25L1 21L8 10M5 19L16 15' },
  { sep: true },
  { short: true, solid: 'M7 8H26V20H7Z', dark: 'M9 11H24M9 14H24M9 17H24', d: 'M2.400 22H8M6 20L8 22L6 24' },
  { sep: true },
]
</script>

<style scoped>
.app {
  position: relative;
  width: 1920px;
  height: 1020px;
  background: #000;
  display: flex;
  flex-direction: column;
  overflow: hidden;
  font-family: "Liberation Sans", Arial, sans-serif;
  color: #ccc;
}
.left-edge {
  position: absolute;
  left: 0;
  top: 38px;
  bottom: 0;
  width: 3px;
  background: #505050;
  z-index: 2;
}

.titlebar {
  height: 38px;
  flex: none;
  display: flex;
  align-items: flex-start;
  background: linear-gradient(#8e8e8e 0, #6c6c6c 20px, #4e4e4e 20px, #3a3a3a 38px);
  border-radius: 4px 4px 0 0;
}
.app-icon {
  display: flex;
  gap: 4px;
  margin: 12px 0 0 7px;
  height: 15px;
  width: 15px;
  flex: none;
}
.app-icon i {
  width: 6px;
  height: 15px;
  flex: none;
  background: #555;
  border: 1px solid #777;
  box-sizing: border-box;
}
.app-icon i.on {
  width: 5px;
  background: #0ca84a;
  border-color: #0f8f40;
}
.app-name {
  margin: 9px 0 0 8px;
  width: 74px;
  font-size: 18px;
  font-weight: 700;
  color: #ccc;
}
.combo {
  display: flex;
  align-items: center;
  height: 29px;
  margin-top: 6px;
  box-sizing: border-box;
  background: #101010;
  border: 1px solid #5c5c5c;
  border-radius: 5px;
  width: 163px;
}
.tf {
  margin-left: 3px;
}
.combo-text {
  font-size: 17px;
  color: #c4ccd4;
  margin-left: 5px;
  width: 102px;
}
.combo-text.small {
  font-size: 16px;
  width: 102px;
}
.combo-caret {
  width: 0;
  height: 0;
  border: 5.5px solid transparent;
  border-top: 7px solid #aaa;
  border-bottom: 0;
  margin-left: 0;
}
.combo-btn {
  margin-left: auto;
  height: 100%;
  width: 36px;
  border-left: 1px solid #5c5c5c;
  box-sizing: content-box;
}
.pencil {
  margin: 6px 0 0 5px;
  width: 28px;
  height: 29px;
  box-sizing: border-box;
  background: #3c3c3c;
  border: 1px solid #5c5c5c;
  border-radius: 5px;
}
.title-icons {
  margin-left: 1px;
  flex: none;
}
.ic {
  fill: none;
  stroke: #c8c8c8;
  stroke-width: 1.5;
}
.ic.thick {
  stroke-width: 2;
}
.ic.gear {
  stroke-width: 3;
  stroke-dasharray: 4 2.500;
}
.fillc {
  fill: #c8c8c8;
}
.a-glyph {
  font-size: 17px;
  fill: #c8c8c8;
}
.win-btns {
  margin-left: auto;
  margin-right: 11px;
  display: flex;
  height: 21px;
}
.win-btn {
  width: 30px;
  height: 21px;
  display: flex;
  align-items: center;
  justify-content: center;
  background: linear-gradient(#747474, #5c5c5c);
  border-left: 1px solid #444;
  box-sizing: border-box;
}
.win-btn:first-child {
  border-radius: 0 0 0 5px;
}
.win-btn.qm {
  font-size: 17px;
  font-weight: 700;
  color: #222;
}
.win-btn.close {
  background: linear-gradient(#b06048, #93473a);
  border-radius: 0 0 5px 0;
}
.wbi {
  fill: none;
  stroke: #222;
  stroke-width: 1.500;
}
.wbi.thick {
  stroke-width: 3;
}
.wbi.x {
  stroke-width: 3.500;
}

.toolbar {
  height: 40px;
  flex: none;
  display: flex;
  align-items: flex-start;
  padding: 5px 0 0 12.6px;
  box-sizing: border-box;
  background: #262626;
  border-top: 1px solid #555;
}
.tool {
  width: 43px;
  height: 30px;
  flex: none;
  overflow: visible;
}
.tool.short {
  width: 30px;
}
.ti {
  fill: none;
  stroke: #c4c4c4;
  stroke-width: 1.500;
}
.ti.dim {
  stroke: #777;
  stroke-width: 2;
}
.sep {
  flex: none;
  width: 1px;
  height: 27px;
  margin: 1px 8px 0 0;
  background: #555;
}
.tx-t {
  font-family: "Liberation Serif", serif;
  font-size: 28px;
  fill: #c4c4c4;
}
.tx-s {
  font-size: 10.500px;
  fill: #c4c4c4;
}
.tx-m {
  font-size: 13px;
  fill: #c4c4c4;
}
.tx-xs {
  font-size: 10px;
  fill: #c4c4c4;
}
.tx-xs.b {
  font-weight: 700;
}
.u-btn {
  flex: none;
  width: 30px;
  height: 28px;
  box-sizing: border-box;
  background: #000;
  border: 1px solid #555;
  border-radius: 5px;
  text-align: center;
  font-size: 27px;
  line-height: 26px;
  font-weight: 700;
  color: #eee;
}
.pin-btn {
  flex: none;
  margin: 0 9px 0 auto;
  width: 29px;
  height: 29px;
  box-sizing: border-box;
  display: flex;
  align-items: center;
  justify-content: center;
  background: linear-gradient(#2a2a2a, #000);
  border: 1px solid #555;
  border-radius: 3px;
}
.strip {
  height: 6px;
  flex: none;
  background: #454545;
}

.main-pane {
  position: relative;
  height: 676px;
  flex: none;
  background: #000;
}
.plot {
  display: block;
}
.grid {
  stroke: #333;
  stroke-dasharray: 5 4;
}
.grid-v {
  stroke: #3f3f3f;
  stroke-dasharray: 6 4;
}
.grid-c {
  stroke: #666;
  stroke-dasharray: 5 4;
}
.zero {
  stroke: #777;
  stroke-dasharray: 5 3;
}
.ln {
  fill: none;
  stroke-width: 1;
}
.blue {
  stroke: #0099ff;
}
.red {
  stroke: #ff0000;
}
.orange {
  stroke: #ff6600;
}
.purple {
  stroke: #9900ff;
  stroke-dasharray: 16 6;
}
.wick {
  stroke: #777;
}
.body {
  stroke: #808080;
}
.trend {
  stroke: #c80000;
  stroke-width: 2;
  stroke-dasharray: 11 8;
}
.gdash {
  stroke: #22dd22;
  stroke-dasharray: 12 4;
}
.pdash {
  stroke: #9900ff;
  stroke-dasharray: 11 4;
}
.bsolid {
  stroke: #0099ff;
}
.reddash {
  stroke: #ff0000;
  stroke-width: 3;
  stroke-dasharray: 15 10;
}
.st {
  font-size: 16px;
}
.light {
  fill: #c4c4c4;
}
.bluet {
  fill: #0099ff;
}
.grayt {
  fill: #7c7c7c;
}
.axis {
  fill: #cfcfcf;
}
.copy {
  font-size: 14px;
  fill: #aaa;
}

.info {
  position: absolute;
  left: 7px;
  top: 1px;
  width: 248px;
  height: 578px;
  box-sizing: border-box;
  padding: 0 1px 0 2px;
  background: rgba(19, 59, 103, 0.5);
  border: 1px solid rgba(40, 90, 130, 0.8);
}
.info-row {
  height: 20px;
  line-height: 19px;
  display: flex;
  justify-content: space-between;
  font-size: 16px;
  white-space: nowrap;
}
.info-row.head {
  justify-content: center;
  font-weight: 700;
  color: #ccc;
}

.tabs {
  height: 30px;
  flex: none;
  display: flex;
  padding-left: 3px;
  background: #000;
  border-top: 2px solid #333;
  box-sizing: border-box;
}
.tab {
  position: relative;
  flex: none;
  box-sizing: border-box;
  height: 28px;
  line-height: 28px;
  padding-left: 10px;
  font-size: 16px;
  letter-spacing: -0.2px;
  color: #c4ccd4;
  background: #000;
  border-right: 1px solid #bbb;
  border-bottom: 1px solid #bbb;
}
.tab.active {
  background: #0d0d0d;
  border-bottom-color: transparent;
}
.tab-rest {
  flex: 1;
  border-bottom: 1px solid #bbb;
}
.tab-x {
  position: absolute;
  right: 2px;
  top: -3px;
  font-size: 11px;
  line-height: 16px;
  color: #666;
}
.tab.active .tab-x {
  color: #ddd;
}

.lower-pane {
  height: 203px;
  flex: none;
}
.lower-pane svg {
  display: block;
}

.x-axis {
  position: relative;
  height: 23px;
  flex: none;
  background: #000;
  display: flex;
  align-items: center;
}
.dyn {
  margin-left: 5px;
  font-size: 18px;
  font-weight: 700;
  color: #ddd;
}
.lock {
  margin-left: 4px;
  width: 23px;
  height: 21px;
  box-sizing: border-box;
  background: #555;
  border: 1px solid #aaa;
}
.date {
  position: absolute;
  top: 5px;
  transform: translateX(-50%);
  font-size: 16px;
  font-weight: 700;
  color: #ccc;
}
.stamp {
  position: absolute;
  right: 100px;
  top: 5px;
  width: 118.500px;
  height: 18px;
  background: #666;
  color: #fff;
  font-size: 16px;
  line-height: 18px;
  text-align: center;
}
.bottom-bar {
  flex: 1;
  background: #505050;
}
</style>

<style>
html,
body {
  background: #000;
}
</style>
